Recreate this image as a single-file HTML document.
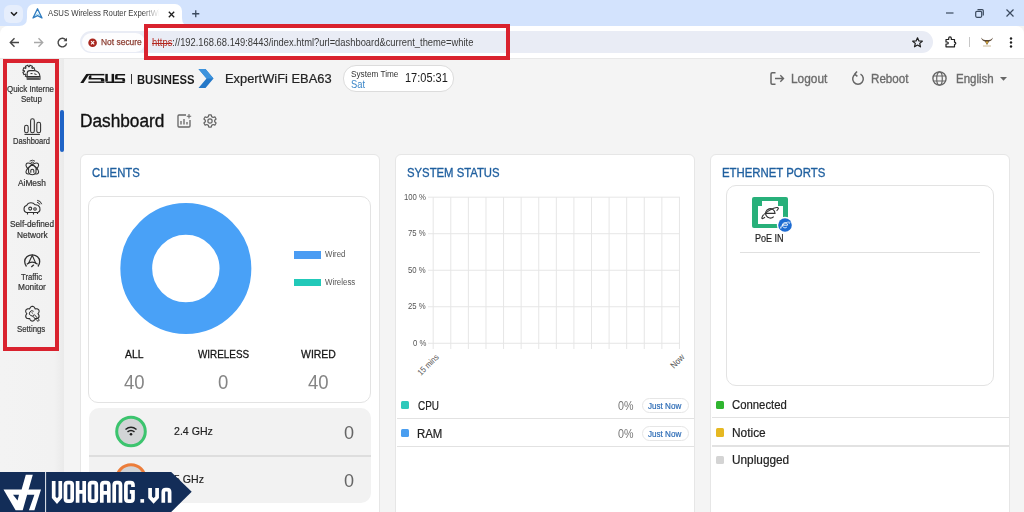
<!DOCTYPE html>
<html><head><meta charset="utf-8">
<style>
*{margin:0;padding:0;box-sizing:border-box}
html,body{width:1024px;height:512px;overflow:hidden;background:#f4f4f4;font-family:"Liberation Sans",sans-serif;position:relative}
.a{position:absolute;white-space:nowrap}
.t{position:absolute;white-space:nowrap;line-height:1;transform-origin:0 0}
svg{position:absolute;overflow:visible}
</style></head><body>

<!-- ===== tab strip ===== -->
<div class="a" style="left:0;top:0;width:1024px;height:26px;background:#d3e3fd"></div>
<div class="a" style="left:4px;top:5px;width:19px;height:18px;border-radius:6px;background:#e6eefc"></div>
<svg style="left:10px;top:11px" width="8" height="6"><path d="M1 1.2 L4 4.2 L7 1.2" fill="none" stroke="#1f1f1f" stroke-width="1.6"/></svg>
<!-- active tab -->
<div class="a" style="left:27px;top:4px;width:155px;height:24px;background:#fff;border-radius:7px 7px 0 0"></div>
<svg style="left:19px;top:18px" width="8" height="9"><path d="M0 8 Q8 8 8 0 L8 9 L0 9Z" fill="#fff"/></svg>
<svg style="left:182px;top:18px" width="8" height="9"><path d="M8 8 Q0 8 0 0 L0 9 L8 9Z" fill="#fff"/></svg>
<svg style="left:32px;top:8px" width="11" height="11"><path d="M5.5 0.8 L10 10 L5.5 7.6 L1 10 Z" fill="#f2fafd" stroke="#2f7cc0" stroke-width="1.3" stroke-linejoin="round"/><path d="M3 7.5L5.5 6L8 7.5" fill="none" stroke="#7dc0e8" stroke-width=".8"/></svg>
<div class="t" style="left:48px;top:9px;font-size:8.6px;color:#3b3b3b;transform:scaleX(.9);-webkit-mask-image:linear-gradient(90deg,#000 85%,transparent)">ASUS Wireless Router ExpertWi</div>
<svg style="left:167.5px;top:10.5px" width="7" height="7"><path d="M0.8 0.8L6.2 6.2M6.2 0.8L0.8 6.2" stroke="#1f1f1f" stroke-width="1.3"/></svg>
<svg style="left:192px;top:10px" width="7.5" height="7.5"><path d="M3.75 0.2V7.3M0.2 3.75H7.3" stroke="#3b4a5e" stroke-width="1.3"/></svg>
<!-- window controls -->
<svg style="left:946px;top:12px" width="8" height="2"><path d="M0 1H7.5" stroke="#3b4a5e" stroke-width="1.2"/></svg>
<svg style="left:975px;top:9px" width="9" height="9"><rect x="0.7" y="2.3" width="6" height="6" rx="1.2" fill="none" stroke="#3b4a5e" stroke-width="1.2"/><path d="M2.5 0.7H7.2Q8.3 0.7 8.3 1.8V6.5" fill="none" stroke="#3b4a5e" stroke-width="1.2"/></svg>
<svg style="left:1006px;top:9px" width="8" height="8"><path d="M0.5 0.5L7.5 7.5M7.5 0.5L0.5 7.5" stroke="#3b4a5e" stroke-width="1.2"/></svg>

<!-- ===== toolbar ===== -->
<div class="a" style="left:0;top:26px;width:1024px;height:33px;background:#fff;border-radius:8px 8px 0 0"></div>
<div class="a" style="left:0;top:58px;width:1024px;height:1px;background:#e8e8e8"></div>
<svg style="left:9px;top:37px" width="11" height="11"><path d="M10 5.5H1.5M5.5 1.3L1.3 5.5L5.5 9.7" fill="none" stroke="#474747" stroke-width="1.4"/></svg>
<svg style="left:33px;top:37px" width="11" height="11"><path d="M1 5.5H9.5M5.5 1.3L9.7 5.5L5.5 9.7" fill="none" stroke="#a8a8a8" stroke-width="1.4"/></svg>
<svg style="left:57px;top:37px" width="11" height="11"><path d="M9 3.2A4.3 4.3 0 1 0 9.6 6.4" fill="none" stroke="#474747" stroke-width="1.4"/><path d="M10 0.8V4.3H6.5Z" fill="#474747"/></svg>
<!-- omnibox -->
<div class="a" style="left:80px;top:31px;width:853px;height:22px;background:#e9ecf5;border-radius:11px"></div>
<div class="a" style="left:82px;top:32.5px;width:63px;height:19px;background:#fdfdfe;border-radius:9.5px"></div>
<svg style="left:88px;top:37.5px" width="10" height="10"><circle cx="4.6" cy="4.8" r="4.3" fill="#a8261e"/><path d="M3 3.2L6.2 6.4M6.2 3.2L3 6.4" stroke="#fff" stroke-width="1.1"/></svg>
<div class="t" style="left:101px;top:37px;font-size:9.4px;color:#8a3b2f;transform:scaleX(.9);-webkit-text-stroke:.25px #8a3b2f">Not secure</div>
<div class="t" style="left:152px;top:37.5px;font-size:10px;color:#3a3a3a;transform:scaleX(.937)"><span style="color:#b3261e;text-decoration:line-through">https</span>://192.168.68.149:8443/index.html?url=dashboard&amp;current_theme=white</div>
<svg style="left:912px;top:37px" width="11" height="11"><path d="M5.5 0.8L6.9 4L10.3 4.2L7.7 6.4L8.5 9.8L5.5 8L2.5 9.8L3.3 6.4L0.7 4.2L4.1 4Z" fill="none" stroke="#1f1f1f" stroke-width="1.2" stroke-linejoin="round"/></svg>
<svg style="left:945px;top:36px" width="13" height="12"><path d="M1 3.5H3.7V2.2Q3.7 0.9 5 0.9Q6.3 0.9 6.3 2.2V3.5H9.5V6.2Q10.8 6.2 10.8 7.3Q10.8 8.4 9.5 8.4V10.8H1V8H2.2Q3.3 8 3.3 7Q3.3 6 2.2 6H1Z" fill="none" stroke="#1f1f1f" stroke-width="1.2" stroke-linejoin="round"/></svg>
<div class="a" style="left:969px;top:37px;width:1px;height:10px;background:#c7c7c7"></div>
<svg style="left:980px;top:37px" width="14" height="10"><path d="M1 0.5Q2 4 5 4.5L7 8L9 4.5Q12 4 13 0.5Q11 3 9 3H5Q3 3 1 0.5Z" fill="#5a4632"/><path d="M5.5 4.5L7 7.5L8.5 4.5Z" fill="#d9a93a"/><path d="M3 9H11" stroke="#bca880" stroke-width=".8"/></svg>
<svg style="left:1009px;top:37px" width="4" height="11"><circle cx="2" cy="1.5" r="1.2" fill="#1f1f1f"/><circle cx="2" cy="5.5" r="1.2" fill="#1f1f1f"/><circle cx="2" cy="9.5" r="1.2" fill="#1f1f1f"/></svg>

<!-- red url highlight -->
<div class="a" style="left:144px;top:24px;width:366px;height:36px;border:4px solid #d9222e"></div>

<!-- ===== sidebar ===== -->
<div class="a" style="left:0;top:59px;width:64px;height:453px;background:linear-gradient(90deg,#f3f3f3 0,#f2f2f2 54px,#eaeaea 64px)"></div>


<div class="a" style="left:3px;top:59px;width:56px;height:292px;border:4px solid #d9222e"></div>
<!-- quick internet setup icon -->

<div class="t" style="left:7px;top:85px;font-size:8.6px;color:#333;-webkit-text-stroke:.2px #333;transform:scaleX(.92);width:51px;overflow:hidden">Quick Internet</div>
<div class="t" style="left:21px;top:95px;font-size:8.6px;color:#333;-webkit-text-stroke:.2px #333;transform:scaleX(.93)">Setup</div>
<!-- dashboard icon -->

<div class="t" style="left:13px;top:137px;font-size:8.6px;color:#333;-webkit-text-stroke:.2px #333;transform:scaleX(.88)">Dashboard</div>
<!-- aimesh icon -->

<div class="t" style="left:18px;top:179px;font-size:8.6px;color:#333;-webkit-text-stroke:.2px #333;transform:scaleX(.97)">AiMesh</div>
<!-- self-defined network icon -->

<div class="t" style="left:9.5px;top:220px;font-size:8.6px;color:#333;-webkit-text-stroke:.2px #333;transform:scaleX(.96)">Self-defined</div>
<div class="t" style="left:16.5px;top:230.5px;font-size:8.6px;color:#333;-webkit-text-stroke:.2px #333;transform:scaleX(.97)">Network</div>
<!-- traffic monitor icon -->

<div class="t" style="left:21px;top:272.5px;font-size:8.6px;color:#333;-webkit-text-stroke:.2px #333;transform:scaleX(.9)">Traffic</div>
<div class="t" style="left:17.5px;top:283px;font-size:8.6px;color:#333;-webkit-text-stroke:.2px #333;transform:scaleX(.97)">Monitor</div>
<!-- settings icon -->

<div class="t" style="left:17px;top:324.5px;font-size:8.6px;color:#333;-webkit-text-stroke:.2px #333;transform:scaleX(.91)">Settings</div>
<svg style="left:0;top:0" width="80" height="360"><g fill="none" stroke="#2f2f2f" stroke-width="1.05">
<path d="M33.38 71.57 L34.91 72.27 L33.90 74.69 L32.33 74.11 L31.81 74.63 L32.39 76.20 L29.97 77.21 L29.27 75.68 L28.53 75.68 L27.83 77.21 L25.41 76.20 L25.99 74.63 L25.47 74.11 L23.90 74.69 L22.89 72.27 L24.42 71.57 L24.42 70.83 L22.89 70.13 L23.90 67.71 L25.47 68.29 L25.99 67.77 L25.41 66.20 L27.83 65.19 L28.53 66.72 L29.27 66.72 L29.97 65.19 L32.39 66.20 L31.81 67.77 L32.33 68.29 L33.90 67.71 L34.91 70.13 L33.38 70.83Z"/>
<path d="M27.2 79.3V73.2Q27.2 70.6 30 70.6H33.5Q39.6 71 40 76.5V79.3Z" fill="#f3f3f3"/>
<path d="M27.2 76.5H40" />
<path d="M27.8 78.2H39.4" stroke="#555" stroke-width="2"/>
<path d="M30.5 73.6H32.5M34.2 73.8L36.5 74.5" stroke-width="1"/>
<rect x="24.6" y="125.2" width="3.6" height="7.6" rx="1.8"/>
<rect x="30.6" y="118.8" width="3.7" height="14" rx="1.85"/>
<rect x="36.8" y="122.3" width="3.8" height="10.5" rx="1.9"/>
<path d="M24.5 134.4H39.9" stroke-width="1.1"/>
<path d="M29.6 161.2Q32.3 159.2 35 161.2M30.8 162.6Q32.3 161.6 33.8 162.6" stroke-width=".9"/>
<ellipse cx="32.3" cy="168.5" rx="7.6" ry="3.4" transform="rotate(38 32.3 168.5)"/>
<ellipse cx="32.3" cy="168.5" rx="7.6" ry="3.4" transform="rotate(-38 32.3 168.5)"/>
<path d="M32.3 164.3L36 168V172.5Q34.5 174.8 32.3 174.8Q30 174.8 28.6 172.5V168Z" fill="#f3f3f3"/>
<path d="M30.8 172.8V170.6Q30.8 169.2 32.3 169.2Q33.8 169.2 33.8 170.6V172.8" />
<path d="M26.5 212.5Q24 212 24 209Q24 206 26.6 205.6Q27.8 202.8 31 202.8Q33.6 202.8 35 204.8Q38.5 204.6 39.8 207.5Q40.6 211.6 37.8 212.5Z" fill="#f3f3f3"/>
<circle cx="30.2" cy="208.6" r="1.5"/>
<circle cx="35" cy="209" r="1.3"/>
<path d="M27.5 212.5V214.6M33.5 212.5V214.6M37.5 212.5V214" stroke-width="1.1"/>
<path d="M37 202.2Q39 202.5 39.8 204.6M37.2 200.3Q40.8 200.8 41.7 204.2" stroke-width="1"/>
<path d="M26.5 266.5Q24.7 264.3 24.7 261.5A7.5 6.6 0 0 1 39.7 261.5Q39.7 264.3 37.9 266.5" stroke-width="1.3"/>
<path d="M28.5 263.5L32.2 255.3L35.9 263.5" stroke-width="1.1"/>
<path d="M26.8 264.2Q32.2 260 37.6 264.2" stroke-width="1.1"/>
<path d="M31.3 267L33.8 264.8" stroke-width="1.3"/>
<path d="M32.40 306.30 L32.79 306.34 L33.16 306.45 L33.52 306.62 L33.85 306.86 L34.16 307.14 L34.42 307.47 L34.66 307.82 L34.86 308.18 L35.03 308.54 L35.20 308.85 L35.56 308.84 L35.95 308.81 L36.36 308.81 L36.78 308.83 L37.20 308.90 L37.60 309.02 L37.97 309.19 L38.30 309.41 L38.58 309.68 L38.81 310.00 L38.97 310.35 L39.06 310.73 L39.09 311.13 L39.05 311.54 L38.96 311.94 L38.81 312.34 L38.62 312.71 L38.41 313.07 L38.19 313.40 L38.00 313.70 L38.19 314.00 L38.41 314.33 L38.62 314.69 L38.81 315.06 L38.96 315.46 L39.05 315.86 L39.09 316.27 L39.06 316.67 L38.97 317.05 L38.81 317.40 L38.58 317.72 L38.30 317.99 L37.97 318.21 L37.60 318.38 L37.20 318.50 L36.78 318.57 L36.36 318.59 L35.95 318.59 L35.56 318.56 L35.20 318.55 L35.03 318.86 L34.86 319.22 L34.66 319.58 L34.42 319.93 L34.16 320.26 L33.85 320.54 L33.52 320.78 L33.16 320.95 L32.79 321.06 L32.40 321.10 L32.01 321.06 L31.64 320.95 L31.28 320.78 L30.95 320.54 L30.64 320.26 L30.38 319.93 L30.14 319.58 L29.94 319.22 L29.77 318.86 L29.60 318.55 L29.24 318.56 L28.85 318.59 L28.44 318.59 L28.02 318.57 L27.60 318.50 L27.20 318.38 L26.83 318.21 L26.50 317.99 L26.22 317.72 L25.99 317.40 L25.83 317.05 L25.74 316.67 L25.71 316.27 L25.75 315.86 L25.84 315.46 L25.99 315.06 L26.18 314.69 L26.39 314.33 L26.61 314.00 L26.80 313.70 L26.61 313.40 L26.39 313.07 L26.18 312.71 L25.99 312.34 L25.84 311.94 L25.75 311.54 L25.71 311.13 L25.74 310.73 L25.83 310.35 L25.99 310.00 L26.22 309.68 L26.50 309.41 L26.83 309.19 L27.20 309.02 L27.60 308.90 L28.02 308.83 L28.44 308.81 L28.85 308.81 L29.24 308.84 L29.60 308.85 L29.77 308.54 L29.94 308.18 L30.14 307.82 L30.38 307.47 L30.64 307.14 L30.95 306.86 L31.28 306.62 L31.64 306.45 L32.01 306.34 L32.40 306.30Z" stroke-width="1.1"/>
<path d="M33.6 311.3A2.6 2.6 0 1 0 34.3 314.6L38.6 319.3Q39.6 320.3 38.6 321Q37.8 321.6 37 320.6L32.6 316" stroke-width="1"/>
<path d="M31.5 312.2L32.8 313.4" stroke-width="1"/>
</g></svg>
<!-- active indicator -->
<div class="a" style="left:60px;top:110px;width:4px;height:42px;border-radius:2px;background:#1f63c6"></div>

<!-- ===== header ===== -->
<svg style="left:78px;top:70px" width="50" height="16" viewBox="0 0 50 16"><g fill="#161616">
<path d="M2.3 12.9H5.5L11.3 3.9H8.3Z"/>
<path d="M9 3.9H26.4V5.4H9Z"/>
<path d="M12.2 5.3H13.4V8.06H10.6Q10.6 5.8 12.2 5.3Z"/>
<path d="M10.6 8.06H24.4Q26.4 8.06 26.4 9.6V11.6H22.9V9.5H10.6Z"/>
<path d="M10.4 11.5H26.4V12.9H10.4Z"/>
<path d="M27.3 3.9H29.8V11.5H27.3Z"/>
<path d="M27.3 11.5H36.1V12.9H29Q27.3 12.9 27.3 11.5Z"/>
<path d="M33.6 3.9H36.1V12.9H33.6Z"/>
<path d="M37.1 5.4Q37.1 3.9 38.6 3.9H47.1V5.4H39.6V8.06H37.1Z"/>
<path d="M37.1 8.06H45.6Q47.1 8.06 47.1 9.6V11.6H44.4V9.5H37.1Z"/>
<path d="M36.1 11.5H47.1V11.8Q47.1 12.9 46 12.9H36.1Z"/>
</g></svg>
<div class="a" style="left:131px;top:74px;width:1.3px;height:10px;background:#333"></div>
<div class="t" style="left:136.5px;top:72.5px;font-size:13.4px;font-weight:bold;color:#1a1a1a;transform:scaleX(.84)">BUSINESS</div>
<svg style="left:198px;top:69px" width="16" height="19" viewBox="0 0 16 19"><path d="M0.5 0H7.5L15.5 9.5L7.5 19H0.5L8.5 9.5Z" fill="#2578c8"/><path d="M0.5 0H7.5L15.5 9.5H8.5Z" fill="#3d93dd"/></svg>
<div class="t" style="left:224.5px;top:71.5px;font-size:13px;color:#222;transform:scaleX(.99);-webkit-text-stroke:.2px #222">ExpertWiFi EBA63</div>
<div class="a" style="left:343px;top:65px;width:111px;height:26.5px;border-radius:13px;background:#fff;border:1px solid #dcdcdc"></div>
<div class="t" style="left:350.5px;top:69.5px;font-size:9px;color:#333;transform:scaleX(.91)">System Time</div>
<div class="t" style="left:350.5px;top:79px;font-size:11px;color:#3b86c8;transform:scaleX(.85)">Sat</div>
<div class="t" style="left:405px;top:72px;font-size:12.5px;color:#1a1a1a;transform:scaleX(.88)">17:05:31</div>

<!-- header right -->
<svg style="left:770px;top:72px" width="15" height="13" viewBox="0 0 15 13"><path d="M5.5 0.8H2.2Q1 0.8 1 2V11Q1 12.2 2.2 12.2H5.5" fill="none" stroke="#666" stroke-width="1.5"/><path d="M5 6.5H13.5M10.3 3.3L13.5 6.5L10.3 9.7" fill="none" stroke="#666" stroke-width="1.4"/></svg>
<div class="t" style="left:791px;top:73px;font-size:12.5px;color:#6b6b6b;transform:scaleX(.95);-webkit-text-stroke:.35px #6b6b6b">Logout</div>
<svg style="left:851px;top:71px" width="14" height="15" viewBox="0 0 14 15" style="transform:scaleX(-1)"><g transform="translate(14 0) scale(-1 1)"><path d="M4.5 3.2A5.3 5.3 0 1 0 9.5 3.2" fill="none" stroke="#666" stroke-width="1.5"/><path d="M8 0.5L10.3 3.2L7.6 5.3" fill="none" stroke="#666" stroke-width="1.5"/></g></svg>
<div class="t" style="left:870.5px;top:73px;font-size:12.5px;color:#6b6b6b;transform:scaleX(.93);-webkit-text-stroke:.35px #6b6b6b">Reboot</div>
<svg style="left:932px;top:71px" width="15" height="15" viewBox="0 0 15 15"><circle cx="7.5" cy="7.5" r="6.6" fill="none" stroke="#666" stroke-width="1.4"/><ellipse cx="7.5" cy="7.5" rx="2.8" ry="6.6" fill="none" stroke="#666" stroke-width="1.2"/><path d="M1 5H14M1 10H14" stroke="#666" stroke-width="1.2"/></svg>
<div class="t" style="left:955.5px;top:73px;font-size:12.5px;color:#6b6b6b;transform:scaleX(.92);-webkit-text-stroke:.35px #6b6b6b">English</div>
<svg style="left:1000px;top:77px" width="7" height="4"><path d="M0 0H7L3.5 3.8Z" fill="#666"/></svg>

<!-- dashboard title -->
<div class="t" style="left:79.5px;top:112.5px;font-size:17.6px;color:#111;transform:scaleX(.98);-webkit-text-stroke:.35px #111">Dashboard</div>
<svg style="left:177px;top:114px" width="15" height="14" viewBox="0 0 15 14"><path d="M9 1H2Q1 1 1 2V12Q1 13 2 13H12Q13 13 13 12V6" fill="none" stroke="#666" stroke-width="1.3"/><path d="M4 10.5V7M7 10.5V5M10 10.5V8" stroke="#666" stroke-width="1.3"/><path d="M12 0V4.5M9.8 2.2H14.2" stroke="#666" stroke-width="1.1"/></svg>
<svg style="left:203px;top:114px" width="14" height="14" viewBox="0 0 17 17"><path d="M7 1H10L10.5 3.2L12.3 4.2L14.4 3.4L15.9 6L14.2 7.5V9.5L15.9 11L14.4 13.6L12.3 12.8L10.5 13.8L10 16H7L6.5 13.8L4.7 12.8L2.6 13.6L1.1 11L2.8 9.5V7.5L1.1 6L2.6 3.4L4.7 4.2L6.5 3.2Z" fill="none" stroke="#666" stroke-width="1.5" stroke-linejoin="round"/><circle cx="8.5" cy="8.5" r="2.6" fill="none" stroke="#666" stroke-width="1.5"/></svg>


<!-- ===== cards ===== -->
<div class="a" style="left:80px;top:154px;width:300px;height:370px;background:#fff;border:1px solid #e6e6e6;border-radius:6px"></div>
<div class="a" style="left:395px;top:154px;width:300px;height:370px;background:#fff;border:1px solid #e6e6e6;border-radius:6px"></div>
<div class="a" style="left:710px;top:154px;width:300px;height:370px;background:#fff;border:1px solid #e6e6e6;border-radius:6px"></div>

<!-- clients -->
<div class="t" style="left:91.5px;top:166px;font-size:13px;color:#1f5f9f;transform:scaleX(.87);-webkit-text-stroke:.35px #1f5f9f">CLIENTS</div>
<div class="a" style="left:88px;top:196px;width:283px;height:207px;border:1px solid #e3e3e3;border-radius:10px;background:#fff"></div>
<svg style="left:119px;top:202px" width="134" height="134"><circle cx="66.85" cy="66.55" r="49.6" fill="none" stroke="#49a1f7" stroke-width="31.8"/></svg>
<div class="a" style="left:294px;top:251px;width:27px;height:7.5px;background:#4a9cf3"></div>
<div class="t" style="left:324.5px;top:250px;font-size:8.5px;color:#555;transform:scaleX(.92)">Wired</div>
<div class="a" style="left:294px;top:278.5px;width:27px;height:7.5px;background:#22c9b9"></div>
<div class="t" style="left:324.5px;top:277.5px;font-size:8.5px;color:#555;transform:scaleX(.93)">Wireless</div>
<div class="t" style="left:124.5px;top:349px;font-size:11.5px;color:#161616;transform:scaleX(.9);-webkit-text-stroke:.3px #161616">ALL</div>
<div class="t" style="left:197.5px;top:349px;font-size:11.5px;color:#161616;transform:scaleX(.86);-webkit-text-stroke:.3px #161616">WIRELESS</div>
<div class="t" style="left:300.8px;top:349px;font-size:11.5px;color:#161616;transform:scaleX(.91);-webkit-text-stroke:.3px #161616">WIRED</div>
<div class="t" style="left:123.5px;top:373px;font-size:19.5px;color:#858585;transform:scaleX(.95)">40</div>
<div class="t" style="left:217.5px;top:373px;font-size:19.5px;color:#858585;transform:scaleX(.95)">0</div>
<div class="t" style="left:308px;top:373px;font-size:19.5px;color:#858585;transform:scaleX(.95)">40</div>
<!-- bands -->
<div class="a" style="left:89px;top:408px;width:282px;height:95px;background:#f2f2f2;border-radius:10px"></div>
<div class="a" style="left:89px;top:455px;width:282px;height:1.5px;background:#dedede"></div>
<svg style="left:114px;top:415px" width="34" height="34"><circle cx="17" cy="16.5" r="14.3" fill="#d2d4d6" stroke="#3cc46e" stroke-width="3"/><path d="M11.5 14.5Q17 10 22.5 14.5M13.5 16.8Q17 14 20.5 16.8" fill="none" stroke="#222" stroke-width="1.5"/><circle cx="17" cy="19.3" r="1.3" fill="#222"/></svg>
<div class="t" style="left:174px;top:426px;font-size:11.5px;color:#222;transform:scaleX(.92);-webkit-text-stroke:.2px #222">2.4 GHz</div>
<div class="t" style="left:343.5px;top:422.5px;font-size:19px;color:#666;transform:scaleX(.95)">0</div>
<svg style="left:114px;top:462px" width="34" height="34"><circle cx="17" cy="17" r="14.3" fill="#d2d4d6" stroke="#ec7d3a" stroke-width="3"/></svg>
<div class="t" style="left:174px;top:474px;font-size:11.5px;color:#222;transform:scaleX(.92);-webkit-text-stroke:.2px #222">5 GHz</div>
<div class="t" style="left:343.5px;top:470.5px;font-size:19px;color:#666;transform:scaleX(.95)">0</div>

<!-- system status -->
<div class="t" style="left:407px;top:166px;font-size:13px;color:#1f5f9f;transform:scaleX(.87);-webkit-text-stroke:.35px #1f5f9f">SYSTEM STATUS</div>
<svg style="left:0;top:0" width="1024" height="512"><g stroke="#e6e6e6" stroke-width="1"><path d="M433.20 197V349" /><path d="M450.79 197V349" /><path d="M468.38 197V349" /><path d="M485.97 197V349" /><path d="M503.56 197V349" /><path d="M521.15 197V349" /><path d="M538.74 197V349" /><path d="M556.33 197V349" /><path d="M573.92 197V349" /><path d="M591.51 197V349" /><path d="M609.10 197V349" /><path d="M626.69 197V349" /><path d="M644.28 197V349" /><path d="M661.87 197V349" /><path d="M679.46 197V349" /> <path d="M428 197.20H680" /><path d="M428 233.72H680" /><path d="M428 270.24H680" /><path d="M428 306.76H680" /><path d="M428 343.28H680" /></g></svg>
<div class="t" style="left:403.5px;top:192.5px;font-size:9px;color:#555;transform:scaleX(.86)">100 %</div>
<div class="t" style="left:407.5px;top:229px;font-size:9px;color:#555;transform:scaleX(.86)">75 %</div>
<div class="t" style="left:407.5px;top:265.5px;font-size:9px;color:#555;transform:scaleX(.86)">50 %</div>
<div class="t" style="left:407.5px;top:302px;font-size:9px;color:#555;transform:scaleX(.86)">25 %</div>
<div class="t" style="left:413px;top:338.5px;font-size:9px;color:#555;transform:scaleX(.86)">0 %</div>
<div class="t" style="left:416px;top:370.5px;font-size:8.6px;color:#555;transform:rotate(-45deg) scaleX(.86)">15 mins</div>
<div class="t" style="left:669px;top:364px;font-size:9px;color:#555;transform:rotate(-45deg) scaleX(.88)">Now</div>
<div class="a" style="left:401px;top:401px;width:8.3px;height:8px;border-radius:1.5px;background:#2ec9bb"></div>
<div class="t" style="left:417.5px;top:399.5px;font-size:12px;color:#222;transform:scaleX(.83);-webkit-text-stroke:.2px #222">CPU</div>
<div class="t" style="left:617.5px;top:399.5px;font-size:12px;color:#777;transform:scaleX(.89)">0%</div>
<div class="a" style="left:641.5px;top:398.3px;width:47px;height:14.5px;border-radius:8px;border:1px solid #e6e6e6;background:#fff"></div>
<div class="t" style="left:647.5px;top:402px;font-size:9px;color:#2d6cb6;transform:scaleX(.9);-webkit-text-stroke:.2px #2d6cb6">Just Now</div>
<div class="a" style="left:396.5px;top:417.5px;width:297.5px;height:1.5px;background:#e2e2e2"></div>
<div class="a" style="left:401px;top:429px;width:8.3px;height:8px;border-radius:1.5px;background:#4a9ef0"></div>
<div class="t" style="left:417px;top:427.5px;font-size:12px;color:#222;transform:scaleX(.95);-webkit-text-stroke:.2px #222">RAM</div>
<div class="t" style="left:617.5px;top:427.5px;font-size:12px;color:#777;transform:scaleX(.89)">0%</div>
<div class="a" style="left:641.5px;top:426.3px;width:47px;height:14.5px;border-radius:8px;border:1px solid #e6e6e6;background:#fff"></div>
<div class="t" style="left:647.5px;top:430px;font-size:9px;color:#2d6cb6;transform:scaleX(.9);-webkit-text-stroke:.2px #2d6cb6">Just Now</div>
<div class="a" style="left:396.5px;top:445.7px;width:297.5px;height:1.5px;background:#e2e2e2"></div>

<!-- ethernet ports -->
<div class="t" style="left:721.5px;top:166px;font-size:13px;color:#1f5f9f;transform:scaleX(.875);-webkit-text-stroke:.35px #1f5f9f">ETHERNET PORTS</div>
<div class="a" style="left:726px;top:185px;width:268px;height:201px;border:1px solid #e3e3e3;border-radius:10px;background:#fff"></div>
<svg style="left:752px;top:196.5px" width="40" height="38" viewBox="0 0 40 38">
<path d="M0 2Q0 0 2 0H34Q36 0 36 2V29Q36 31 34 31H2Q0 31 0 29Z" fill="#28b07a"/>
<path d="M6 27V9H10V4H26V9H31V27Z" fill="#fff"/>
<path d="M13.6 16.3H23A4.7 4.7 0 1 0 21.7 19.6" fill="none" stroke="#333" stroke-width="1.15"/>
<path d="M13 20.3Q9.3 23 10 20.3Q11 17.2 17 13.6Q23 10.2 25.5 10.6Q27.6 11.1 24.6 13.8" fill="none" stroke="#333" stroke-width="1.1"/>
<circle cx="33" cy="28" r="8.2" fill="#fff"/>
<circle cx="33" cy="28" r="6.8" fill="#1d6bd2"/>
<path d="M30.4 28.2H35.6A2.6 2.6 0 1 0 34.8 30.1" fill="none" stroke="#fff" stroke-width=".9"/>
<path d="M29.8 30.6Q28 32 28.5 30.5Q29.2 28.6 32.6 26.6Q36 24.6 37.4 25Q38.6 25.4 36.9 26.9" fill="none" stroke="#fff" stroke-width=".8"/>
</svg>
<div class="t" style="left:754.5px;top:233px;font-size:10.5px;color:#222;transform:scaleX(.86);-webkit-text-stroke:.2px #222">PoE IN</div>
<div class="a" style="left:740px;top:251.8px;width:240px;height:1.2px;background:#e0e0e0"></div>
<div class="a" style="left:716px;top:401px;width:8.3px;height:8.3px;border-radius:1.5px;background:#2fb52f"></div>
<div class="t" style="left:731.5px;top:399px;font-size:12px;color:#222;transform:scaleX(.945);-webkit-text-stroke:.2px #222">Connected</div>
<div class="a" style="left:711.5px;top:416.5px;width:297.5px;height:1.5px;background:#e2e2e2"></div>
<div class="a" style="left:716px;top:428.3px;width:8.3px;height:8.3px;border-radius:1.5px;background:#e6b822"></div>
<div class="t" style="left:731.5px;top:426.5px;font-size:12px;color:#222;transform:scaleX(.99);-webkit-text-stroke:.2px #222">Notice</div>
<div class="a" style="left:711.5px;top:445px;width:297.5px;height:1.5px;background:#e2e2e2"></div>
<div class="a" style="left:716px;top:455.5px;width:8.3px;height:8.3px;border-radius:1.5px;background:#d4d4d4"></div>
<div class="t" style="left:731.5px;top:454px;font-size:12px;color:#222;transform:scaleX(.985);-webkit-text-stroke:.2px #222">Unplugged</div>

<!-- ===== watermark ===== -->
<svg style="left:0;top:472px" width="192" height="40" viewBox="0 0 192 40">
<path d="M0 0H171.2L191.7 19.8L171.2 40H0Z" fill="#132d58"/>
<path d="M45.6 0V40" stroke="#e8ecf2" stroke-width="1"/>
<path d="M3.5 17.6H21.6L25.8 2.7H32.8L22.7 38.3H15.6Z" fill="#fff"/>
<path d="M13 22.7H19L17.6 28.5Z" fill="#132d58"/>
<path d="M27.3 17.6H41L34.4 38.3H28.9L34.4 22.7H27Z" fill="#fff"/>
</svg>
<svg style="left:0;top:0" width="1024" height="512"><g fill="none" stroke="#fff" stroke-width="3.7" stroke-linejoin="miter"><path d="M53.7 481.0V497.2L57.0 501.09999999999997L60.300000000000004 497.2V481.0" fill="none"/><rect x="65.5" y="482.6" width="6.7" height="18.49999999999999" rx="2.2"/><path d="M77.6 481.0V502.7M84.2 481.0V502.7M77.6 491.85H84.2" fill="none"/><rect x="89.6" y="482.6" width="6.7" height="18.49999999999999" rx="2.2"/><path d="M101.8 502.7V485.0Q101.8 482.6 104.2 482.6H106.4Q108.80000000000001 482.6 108.80000000000001 485.0V502.7M101.8 492.85H108.80000000000001" fill="none"/><path d="M114.19999999999999 502.7V485.0Q114.19999999999999 482.6 116.6 482.6H118.1Q120.5 482.6 120.5 485.0V502.7" fill="none"/><path d="M133.0 487.0V485.0Q133.0 482.6 130.6 482.6H128.3Q125.89999999999999 482.6 125.89999999999999 485.0V498.7Q125.89999999999999 501.09999999999997 128.3 501.09999999999997H130.6Q133.0 501.09999999999997 133.0 498.7V491.85H129.8" fill="none"/><rect x="140.4" y="499.09999999999997" width="3.7" height="3.6" fill="#fff" stroke="none"/><path d="M150.1 488V497.2L153.6 501.09999999999997L157.1 497.2V488" fill="none"/><path d="M163.29999999999998 502.7V492Q163.29999999999998 489.6 165.7 489.6H167.2Q169.6 489.6 169.6 492V502.7" fill="none"/></g></svg>
</body></html>
